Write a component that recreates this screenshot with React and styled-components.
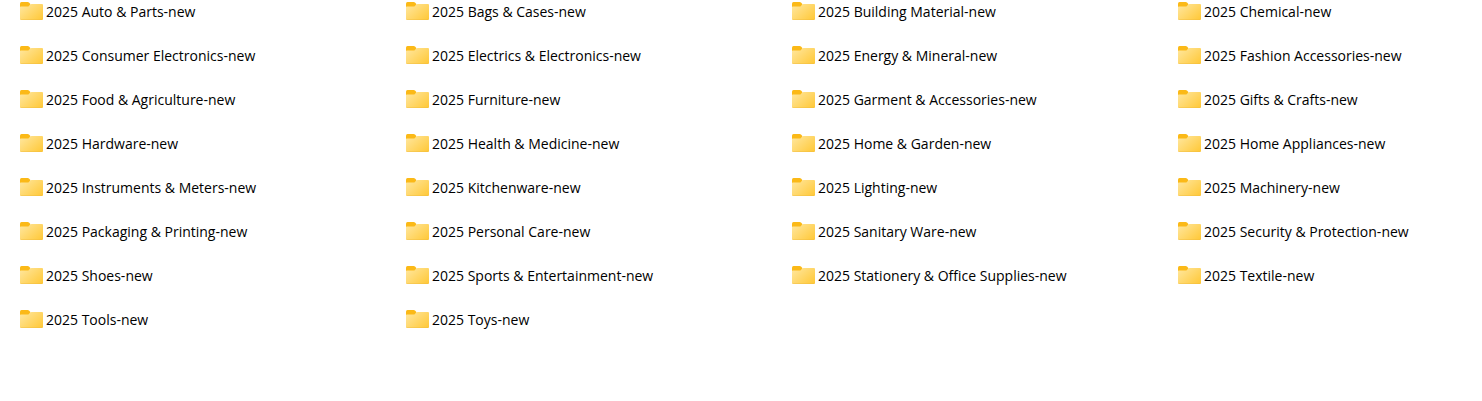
import React from 'react';
import styled, {createGlobalStyle} from 'styled-components';

const GlobalStyle = createGlobalStyle`
  body {
    margin: 0;
    background: #ffffff;
    color: #000000;
    font-family: "Segoe UI", "Open Sans", "Noto Sans", sans-serif;
    font-size: 14px;
  }
`;

const FolderGrid = styled.ul`
  display: grid;
  grid-template-columns: repeat(4, minmax(0, 1fr));
  gap: 22px 82px;
  margin: 0;
  padding: 0 0 0 20px;
  list-style: none;
`;

const FolderLink = styled.a`
  display: flex;
  align-items: center;
  gap: 3px;
  color: inherit;
  text-decoration: none;
`;

const FolderName = styled.span`
  padding-top: 2px;
  line-height: 20px;
  white-space: nowrap;
`;

const Icon = styled.svg`
  flex: none;
  width: 23px;
  height: 18px;
`;

const FolderIcon = () => (
  <Icon viewBox="0 0 23 18" aria-hidden="true">
    <path d="M0 1.5Q0 0 1.5 0H7.6Q8.4 0 9 .6L10.3 2V6H0Z" fill="#fbb917" />
    <path d="M0 5Q0 4.4.7 4.4H7.8Q8.4 4.4 8.9 3.9L10.2 2.5Q10.7 2 11.5 2H22Q23 2 23 3V16.8Q23 18 21.8 18H1.2Q0 18 0 16.8Z" fill="url(#folder-front)" />
    <path d="M.3 17.2Q.6 17.6 1.2 17.6H21.8Q22.4 17.6 22.7 17.2" fill="none" stroke="#efb93c" strokeWidth=".7" opacity=".6" />
  </Icon>
);

// shared by every folder icon on the page
const IconDefs = () => (
  <svg width="0" height="0" style={{display: 'block'}} aria-hidden="true">
    <defs>
      <linearGradient id="folder-front" x1="0" y1="0.1" x2="1" y2="0.9">
        <stop offset="0" stopColor="#ffe69c" />
        <stop offset="1" stopColor="#ffc93a" />
      </linearGradient>
    </defs>
  </svg>
);

const folders = [
  'Auto & Parts', 'Bags & Cases', 'Building Material', 'Chemical',
  'Consumer Electronics', 'Electrics & Electronics', 'Energy & Mineral', 'Fashion Accessories',
  'Food & Agriculture', 'Furniture', 'Garment & Accessories', 'Gifts & Crafts',
  'Hardware', 'Health & Medicine', 'Home & Garden', 'Home Appliances',
  'Instruments & Meters', 'Kitchenware', 'Lighting', 'Machinery',
  'Packaging & Printing', 'Personal Care', 'Sanitary Ware', 'Security & Protection',
  'Shoes', 'Sports & Entertainment', 'Stationery & Office Supplies', 'Textile',
  'Tools', 'Toys',
];

const App = () => (
  <>
    <GlobalStyle />
    <IconDefs />
    <FolderGrid>
      {folders.map(name => (
        <li key={name}>
          <FolderLink href="#">
            <FolderIcon />
            <FolderName>{`2025 ${name}-new`}</FolderName>
          </FolderLink>
        </li>
      ))}
    </FolderGrid>
  </>
);

export default App;
